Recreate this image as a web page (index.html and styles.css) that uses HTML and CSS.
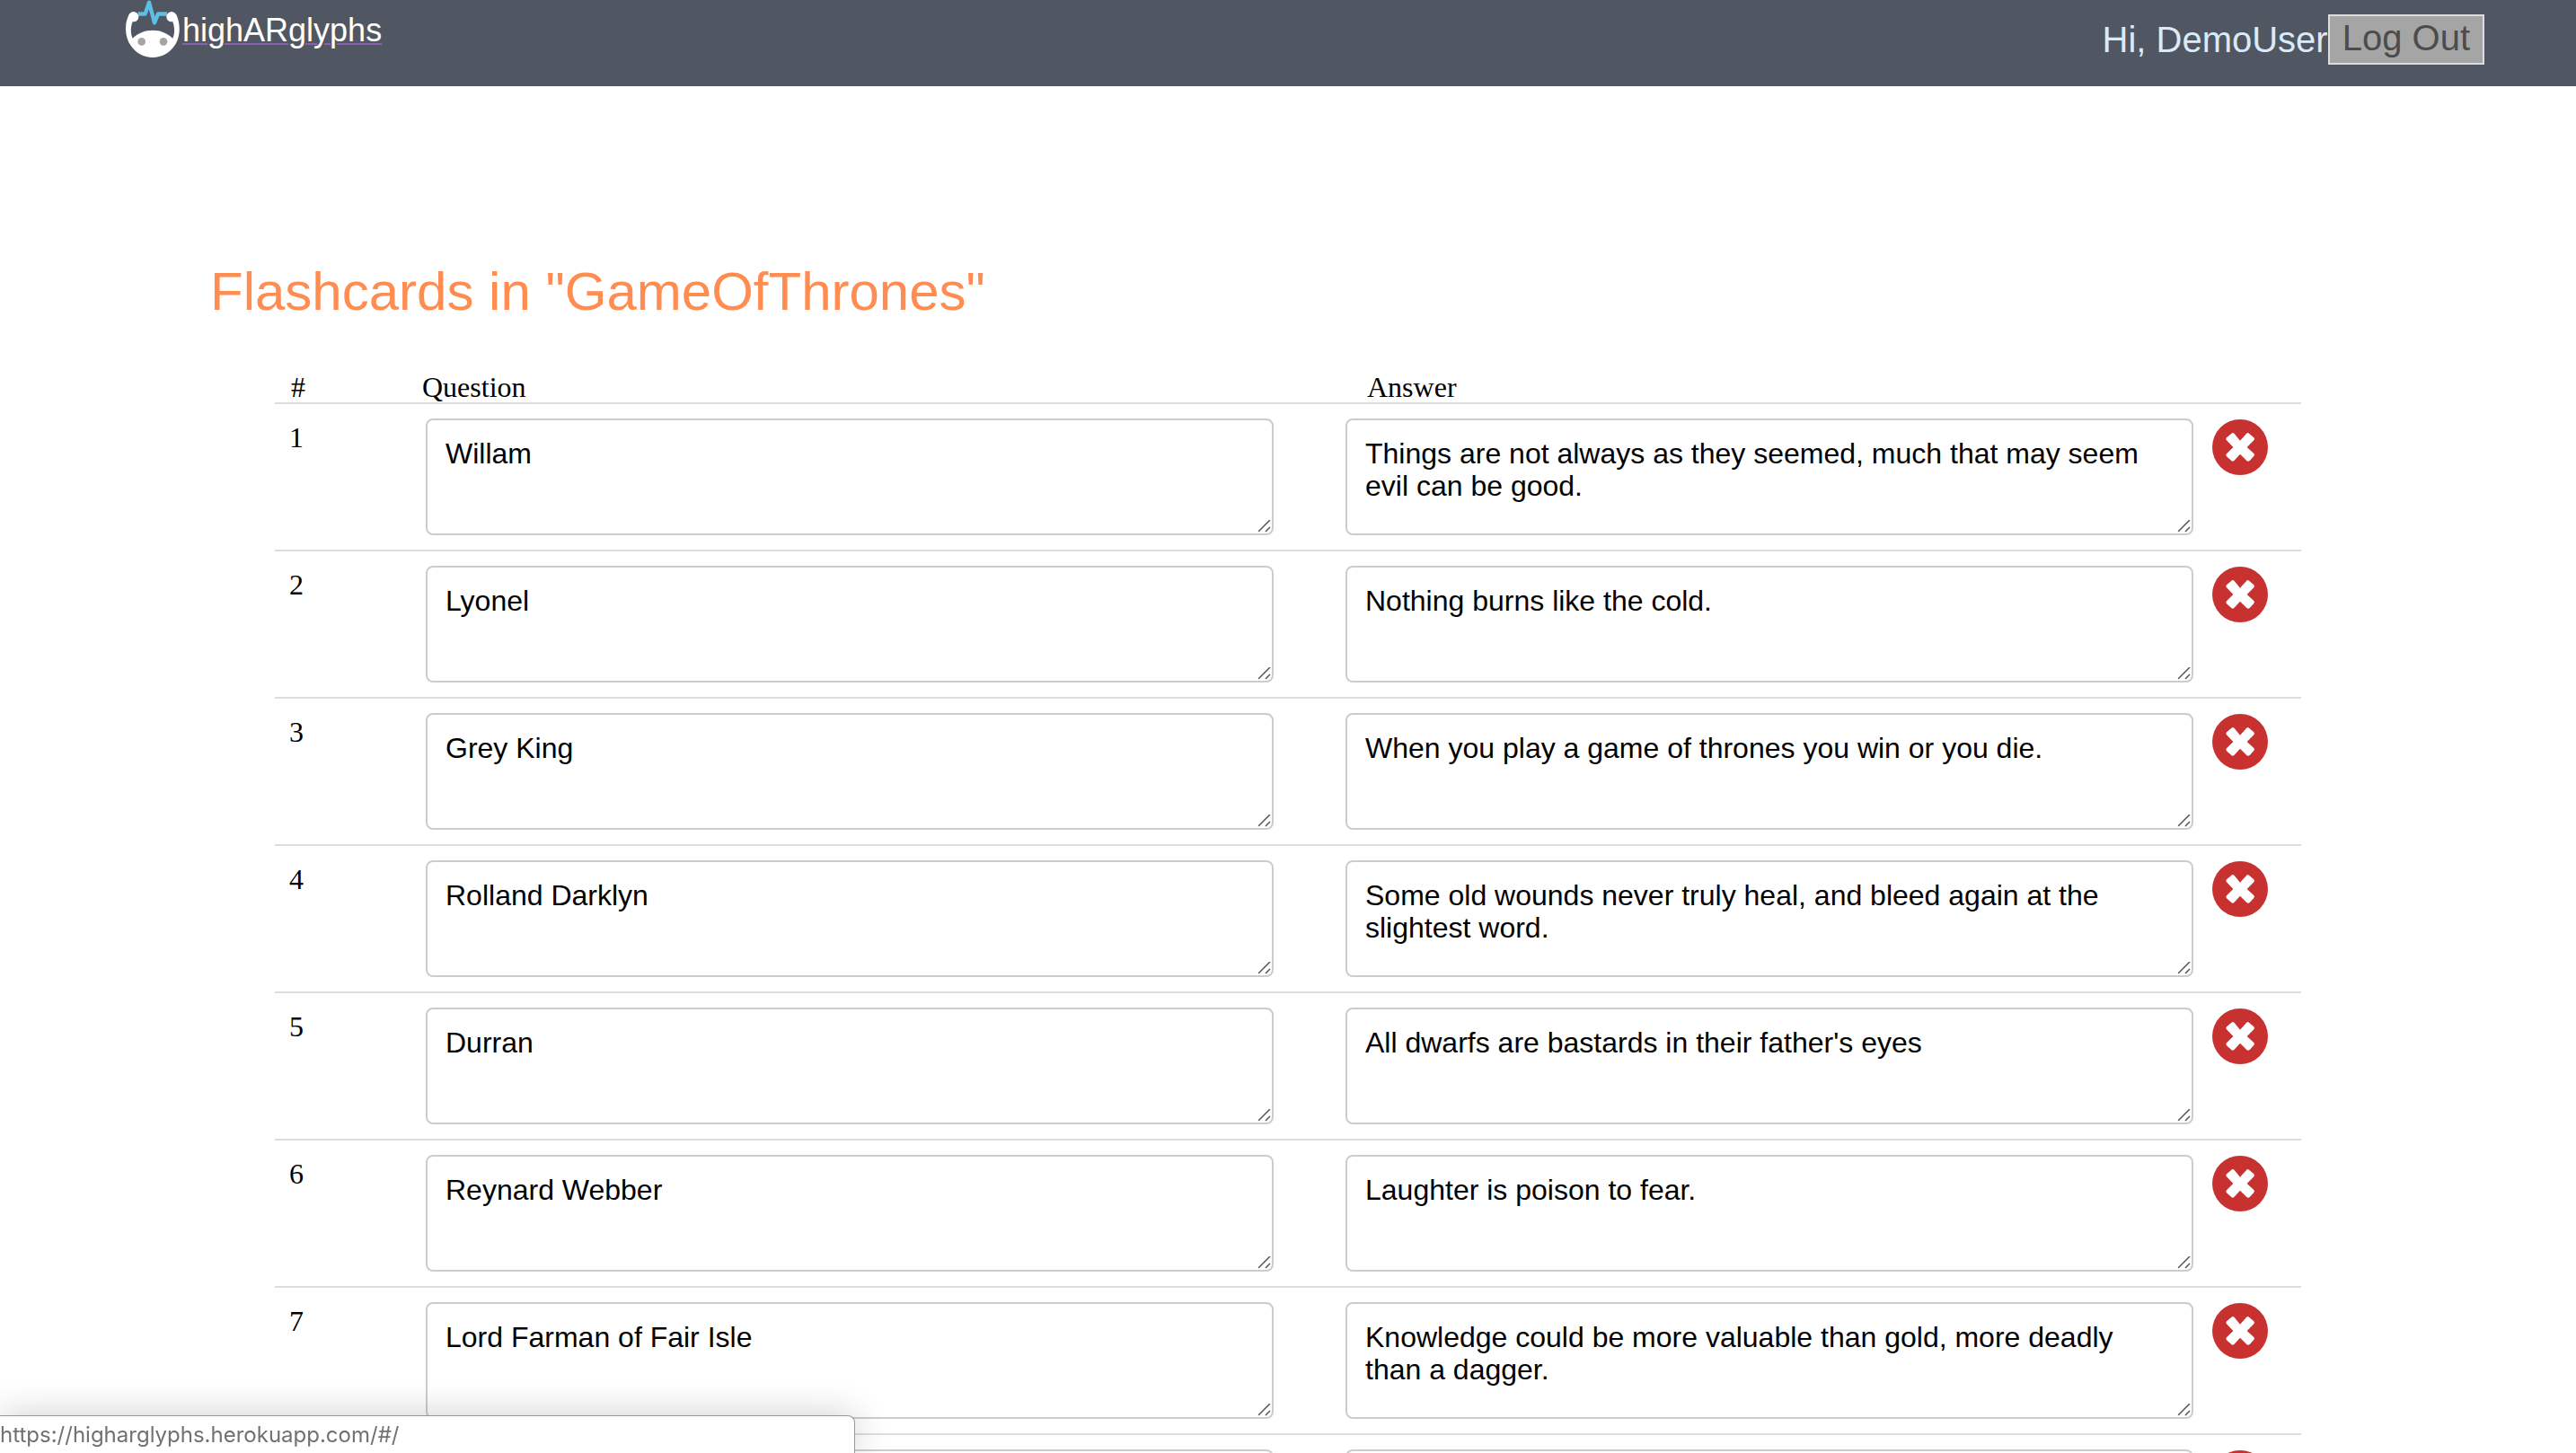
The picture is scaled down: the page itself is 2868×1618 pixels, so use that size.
FILE: index.html
```html
<!DOCTYPE html>
<html lang="en">
<head>
<meta charset="utf-8">
<title>highARglyphs</title>
<link rel="stylesheet" href="styles.css">
</head>
<body>
<svg class="sprite" aria-hidden="true">
  <symbol id="remove" viewBox="0 0 186 186">
    <circle cx="93" cy="93" r="93" fill="#c73130"/>
    <path d="M66 46 Q70 44 74 48 L93 71 L114 48 Q119 43 123 47 L139 61 Q143 65 139 70 L116 93 L139 114 Q143 119 139 123 L125 138 Q120 142 115 138 L93 116 L73 138 Q68 142 64 138 L48 124 Q44 119 48 115 L70 93 L48 70 Q44 65 48 61 Z" fill="#fff"/>
  </symbol>
</svg>
<header class="topbar">
  <a class="brand" href="#/">
    <svg class="brand-icon" viewBox="60 0 180 192" aria-hidden="true">
      <path d="M101 46.500H125L138 8L156 76L168 46.500H198" fill="none" stroke="#5bbfe8" stroke-width="13" stroke-linejoin="round"/>
      <path d="M72 48C56 72 54 122 78 154C94 178 120 192 150 192C180 192 206 178 222 154C246 122 242 72 228 48L212 62C224 82 225 110 217 128C200 111 176 101 150 101C124 101 99 111 83 128C74 110 76 82 88 62Z" fill="#fff"/>
      <circle cx="86" cy="56" r="17" fill="#fff"/>
      <circle cx="213" cy="56" r="17" fill="#fff"/>
      <circle cx="113" cy="139" r="13" fill="#a5a5a5"/>
      <circle cx="186" cy="139" r="13" fill="#a5a5a5"/>
    </svg>
    <span class="brand-name">highARglyphs</span>
  </a>
  <div class="user">
    <span class="greeting">Hi, DemoUser</span>
    <button class="logout" type="button">Log Out</button>
  </div>
</header>
<main class="content">
  <h1 class="title">Flashcards in "GameOfThrones"</h1>
  <table class="cards">
    <colgroup><col class="col-num"><col><col><col class="col-action"></colgroup>
    <thead>
      <tr><th class="num">#</th><th class="question" id="q">Question</th><th class="answer" id="a">Answer</th><th></th></tr>
    </thead>
    <tbody>
      <tr><td class="num">1</td><td class="question"><textarea aria-labelledby="q">Willam</textarea></td><td class="answer"><textarea aria-labelledby="a">Things are not always as they seemed, much that may seem evil can be good.</textarea></td><td class="action"><button class="remove" type="button" aria-label="Delete"><svg><use href="#remove"/></svg></button></td></tr>
      <tr><td class="num">2</td><td class="question"><textarea aria-labelledby="q">Lyonel</textarea></td><td class="answer"><textarea aria-labelledby="a">Nothing burns like the cold.</textarea></td><td class="action"><button class="remove" type="button" aria-label="Delete"><svg><use href="#remove"/></svg></button></td></tr>
      <tr><td class="num">3</td><td class="question"><textarea aria-labelledby="q">Grey King</textarea></td><td class="answer"><textarea aria-labelledby="a">When you play a game of thrones you win or you die.</textarea></td><td class="action"><button class="remove" type="button" aria-label="Delete"><svg><use href="#remove"/></svg></button></td></tr>
      <tr><td class="num">4</td><td class="question"><textarea aria-labelledby="q">Rolland Darklyn</textarea></td><td class="answer"><textarea aria-labelledby="a">Some old wounds never truly heal, and bleed again at the slightest word.</textarea></td><td class="action"><button class="remove" type="button" aria-label="Delete"><svg><use href="#remove"/></svg></button></td></tr>
      <tr><td class="num">5</td><td class="question"><textarea aria-labelledby="q">Durran</textarea></td><td class="answer"><textarea aria-labelledby="a">All dwarfs are bastards in their father's eyes</textarea></td><td class="action"><button class="remove" type="button" aria-label="Delete"><svg><use href="#remove"/></svg></button></td></tr>
      <tr><td class="num">6</td><td class="question"><textarea aria-labelledby="q">Reynard Webber</textarea></td><td class="answer"><textarea aria-labelledby="a">Laughter is poison to fear.</textarea></td><td class="action"><button class="remove" type="button" aria-label="Delete"><svg><use href="#remove"/></svg></button></td></tr>
      <tr><td class="num">7</td><td class="question"><textarea aria-labelledby="q">Lord Farman of Fair Isle</textarea></td><td class="answer"><textarea aria-labelledby="a">Knowledge could be more valuable than gold, more deadly than a dagger.</textarea></td><td class="action"><button class="remove" type="button" aria-label="Delete"><svg><use href="#remove"/></svg></button></td></tr>
      <tr><td class="num"></td><td class="question"><textarea aria-labelledby="q"></textarea></td><td class="answer"><textarea aria-labelledby="a"></textarea></td><td class="action"><button class="remove" type="button" aria-label="Delete"><svg><use href="#remove"/></svg></button></td></tr>
    </tbody>
  </table>
</main>
<div class="status">https://higharglyphs.herokuapp.com/#/</div>
</body>
</html>
```
FILE: styles.css
```css
* {
  box-sizing: border-box;
}

body {
  display: flex;
  flex-direction: column;
  height: 100vh;
  margin: 0;
  overflow: hidden;
  background: #fff;
  color: #000;
  font-family: "Liberation Sans", Helvetica, Arial, sans-serif;
}

.sprite {
  position: absolute;
  width: 0;
  height: 0;
}

.topbar {
  display: flex;
  flex: none;
  justify-content: space-between;
  align-items: flex-start;
  height: 96px;
  padding: 0 102px 0 140px;
  background: #505762;
}

.brand {
  display: flex;
  gap: 3px;
  color: #fff;
  font-size: 36px;
  line-height: 40px;
  text-decoration: none;
}

.brand-icon {
  width: 60px;
  height: 64px;
}

.brand-name {
  padding-top: 14px;
  text-decoration: underline 2px #8960b0;
  text-underline-offset: 2px;
}

.user {
  display: flex;
  padding-top: 16px;
  font-size: 40px;
  line-height: 46px;
}

.greeting {
  padding-top: 5px;
  color: #dce9f7;
}

.logout {
  height: 56px;
  padding: 0 14px 4px;
  border: 2px solid #ddd;
  background: #a5a5a5;
  color: #4c4c4c;
  font: inherit;
}

.content {
  flex: 1;
  min-height: 0;
  padding: 194px 306px 0;
  overflow-y: auto;
  scrollbar-width: none;
}

.title {
  margin: 0 0 54px -72px;
  color: #ff8c50;
  font-size: 60px;
  font-weight: 400;
  line-height: 70px;
}

.cards {
  width: 100%;
  border-spacing: 0;
  table-layout: fixed;
  font-family: "Liberation Serif", "Times New Roman", serif;
  font-size: 32px;
  line-height: 36px;
}

.col-num {
  width: 152px;
}

.col-action {
  width: 104px;
}

.cards th {
  padding: 0;
  font-weight: 400;
  line-height: 34px;
  text-align: left;
}

.cards td {
  padding: 16px 0;
  border-top: 2px solid #ddd;
  vertical-align: top;
}

.cards th.num {
  padding-left: 18px;
}

.cards th.question {
  padding-left: 12px;
}

.cards th.answer {
  padding-left: 64px;
}

.cards td.num {
  padding: 19px 0 0 16px;
}

.cards td.question {
  padding: 16px 40px 16px 16px;
}

.cards td.answer {
  padding: 16px 16px 16px 40px;
}

.cards td.action {
  padding: 17px 0 0 5px;
}

textarea {
  display: block;
  width: 100%;
  height: 130px;
  padding: 19px 20px 17px;
  border: 2px solid #ccc;
  border-radius: 8px;
  background: #fff;
  color: #000;
  font: 32px/36px "Liberation Sans", Helvetica, Arial, sans-serif;
  resize: both;
}

textarea::-webkit-resizer {
  background: url("data:image/svg+xml,%3Csvg xmlns='http://www.w3.org/2000/svg' width='15' height='15'%3E%3Cpath d='M0 13L13 0M8 13L13 8' stroke='%23555' stroke-width='1.5'/%3E%3C/svg%3E") no-repeat;
}

.remove {
  display: block;
  width: 62px;
  height: 62px;
  padding: 0;
  border: 0;
  background: none;
}

.remove svg {
  display: block;
  width: 100%;
  height: 100%;
}

.status {
  position: fixed;
  bottom: 0;
  left: 0;
  width: 952px;
  height: 42px;
  padding-top: 7px;
  border: 1px solid #999;
  border-width: 1px 1px 0 0;
  border-radius: 0 8px 0 0;
  background: #fff;
  box-shadow: 0 0 40px rgba(0, 0, 0, 0.2);
  color: #6e7175;
  font: 24px/28px Inter, sans-serif;
}
```
